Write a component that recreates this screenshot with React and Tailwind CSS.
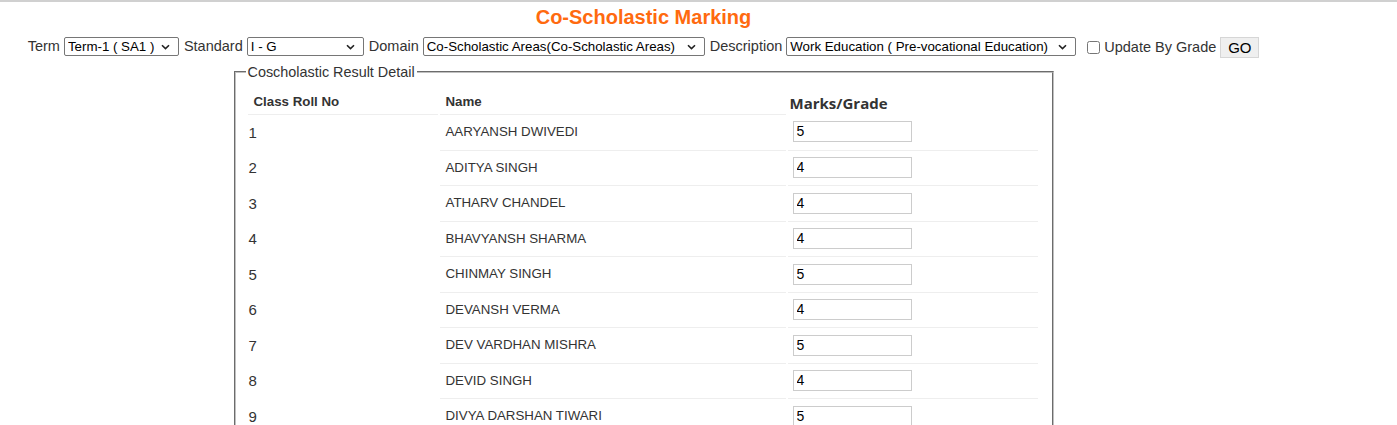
import React from 'react';

const students = [
  { roll: 1, name: 'AARYANSH DWIVEDI', mark: '5' },
  { roll: 2, name: 'ADITYA SINGH', mark: '4' },
  { roll: 3, name: 'ATHARV CHANDEL', mark: '4' },
  { roll: 4, name: 'BHAVYANSH SHARMA', mark: '4' },
  { roll: 5, name: 'CHINMAY SINGH', mark: '5' },
  { roll: 6, name: 'DEVANSH VERMA', mark: '4' },
  { roll: 7, name: 'DEV VARDHAN MISHRA', mark: '5' },
  { roll: 8, name: 'DEVID SINGH', mark: '4' },
  { roll: 9, name: 'DIVYA DARSHAN TIWARI', mark: '5' },
  { roll: 10, name: 'GAURAV PANDEY', mark: '4' },
];

function Chevron() {
  return (
    <svg width="9" height="6" viewBox="0 0 9 6" className="pointer-events-none absolute right-[9px] top-1/2 -translate-y-1/2">
      <path d="M1 1.2 L4.5 4.6 L8 1.2" fill="none" stroke="#222" strokeWidth="1.6" />
    </svg>
  );
}

function Picker({ width, value }) {
  return (
    <span className="relative inline-block" style={{ width }}>
      <select
        defaultValue={value}
        className="h-[19px] w-full appearance-none rounded-[2px] border border-[#767676] bg-white pl-[3px] pr-5 text-[13.3px] leading-[17px] text-black outline-none"
      >
        <option>{value}</option>
      </select>
      <Chevron />
    </span>
  );
}

export default function App() {
  return (
    <div className="min-h-screen bg-white font-['Liberation_Sans',Arial,sans-serif] text-[#333]">
      <div className="h-[2px] w-full bg-[#d0d0d0]" />
      <div className="w-[1287px]">
        <h1 className="mt-[4px] h-[23px] text-center text-[20px] font-bold leading-[23px] text-[#ff6a0f]">
          Co-Scholastic Marking
        </h1>

        <div className="mt-[6.5px] flex h-[23px] items-center justify-center text-[14.5px]">
          <span>Term</span>
          <span className="ml-[4px]"><Picker width={115} value="Term-1 ( SA1 )" /></span>
          <span className="ml-[5px]">Standard</span>
          <span className="ml-[4px]"><Picker width={117} value="I - G" /></span>
          <span className="ml-[5px]">Domain</span>
          <span className="ml-[4px]"><Picker width={282} value="Co-Scholastic Areas(Co-Scholastic Areas)" /></span>
          <span className="ml-[5px]">Description</span>
          <span className="ml-[4px]"><Picker width={290} value="Work Education ( Pre-vocational Education)" /></span>
          <input type="checkbox" className="ml-[11px] mt-[1px] h-[13px] w-[13px]" />
          <span className="ml-[4px] mt-[2px]">Update By Grade</span>
          <button className="ml-[4px] h-[21px] w-[39px] border border-[#d6d6d6] bg-[#efefef] text-[15px] leading-[19px] text-black">
            GO
          </button>
        </div>

        <fieldset className="mx-auto mt-[5px] w-[820px] border-2 border-[#c0c0c0] px-[10px] pb-[10px] [border-style:groove]">
          <legend className="px-[2px] text-[14.4px] leading-[17px] text-[#333]">Coscholastic Result Detail</legend>
          <table className="w-[794px] table-fixed border-separate border-spacing-x-[2px] border-spacing-y-0">
            <colgroup>
              <col className="w-[190px]" />
              <col className="w-[346px]" />
              <col className="w-[250px]" />
            </colgroup>
            <thead>
              <tr className="h-[33.5px]">
                <th className="pb-[5px] pl-[6px] text-left align-bottom text-[13.3px] font-bold leading-[15px]">Class Roll No</th>
                <th className="pb-[5px] pl-[6px] text-left align-bottom text-[13.3px] font-bold leading-[15px]">Name</th>
                <th className="pb-[2px] pl-[2px] text-left align-bottom font-['Open_Sans',sans-serif] text-[15px] font-bold leading-[18px] text-[#333]">
                  Marks/Grade
                </th>
              </tr>
            </thead>
            <tbody>
              {students.map((s, i) => (
                <tr key={s.roll} className="h-[35.5px]">
                  <td className={`pl-[1px] pt-[2px] align-middle text-[15px] ${i === 0 ? 'border-t border-[#eeeeee]' : ''}`}>
                    {s.roll}
                  </td>
                  <td className="border-t border-[#eeeeee] pl-[6px] align-middle text-[13.3px]">{s.name}</td>
                  <td className={`pl-[5px] align-middle ${i === 0 ? '' : 'border-t border-[#eeeeee]'}`}>
                    <input
                      type="text"
                      defaultValue={s.mark}
                      className="block h-[21px] w-[119px] border border-[#cccccc] bg-white pl-[3px] text-[14px] text-black outline-none"
                    />
                  </td>
                </tr>
              ))}
            </tbody>
          </table>
        </fieldset>
      </div>
    </div>
  );
}
